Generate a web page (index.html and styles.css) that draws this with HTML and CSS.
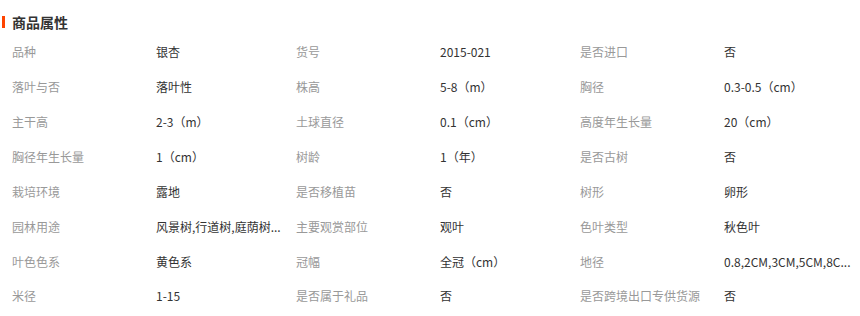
FILE: index.html
```html
<!DOCTYPE html>
<html lang="zh-CN">
<head>
<meta charset="utf-8">
<link rel="stylesheet" href="styles.css">
</head>
<body>
<div class="panel">
  <h2 class="title"><span class="bar"></span>商品属性</h2>
  <div class="attrs">
    <div class="k">品种</div><div class="v">银杏</div>
    <div class="k">货号</div><div class="v">2015-021</div>
    <div class="k">是否进口</div><div class="v">否</div>

    <div class="k">落叶与否</div><div class="v">落叶性</div>
    <div class="k">株高</div><div class="v">5-8（m）</div>
    <div class="k">胸径</div><div class="v">0.3-0.5（cm）</div>

    <div class="k">主干高</div><div class="v">2-3（m）</div>
    <div class="k">土球直径</div><div class="v">0.1（cm）</div>
    <div class="k">高度年生长量</div><div class="v">20（cm）</div>

    <div class="k">胸径年生长量</div><div class="v">1（cm）</div>
    <div class="k">树龄</div><div class="v">1（年）</div>
    <div class="k">是否古树</div><div class="v">否</div>

    <div class="k">栽培环境</div><div class="v">露地</div>
    <div class="k">是否移植苗</div><div class="v">否</div>
    <div class="k">树形</div><div class="v">卵形</div>

    <div class="k">园林用途</div><div class="v">风景树,行道树,庭荫树...</div>
    <div class="k">主要观赏部位</div><div class="v">观叶</div>
    <div class="k">色叶类型</div><div class="v">秋色叶</div>

    <div class="k">叶色色系</div><div class="v">黄色系</div>
    <div class="k">冠幅</div><div class="v">全冠（cm）</div>
    <div class="k">地径</div><div class="v">0.8,2CM,3CM,5CM,8C...</div>

    <div class="k">米径</div><div class="v">1-15</div>
    <div class="k">是否属于礼品</div><div class="v">否</div>
    <div class="k">是否跨境出口专供货源</div><div class="v">否</div>
  </div>
</div>
</body>
</html>
```

FILE: styles.css
```css
html, body {
  margin: 0;
  padding: 0;
  background: #fff;
}
body {
  font-family: "Noto Sans CJK SC", "Noto Sans", sans-serif;
  font-size: 12px;
  color: #333;
}
.panel {
  width: 860px;
  height: 316px;
  overflow: hidden;
}
.title {
  margin: 0;
  padding: 9px 0 0 2px;
  height: 26px;
  display: flex;
  align-items: center;
  font-size: 14px;
  font-weight: bold;
  color: #333;
  line-height: 20px;
}
.bar {
  width: 3px;
  height: 12px;
  background: #ff4400;
  margin-right: 7px;
}
.attrs {
  display: grid;
  grid-template-columns: 144px 140px 144px 140px 144px 136px;
  grid-auto-rows: 34.86px;
  padding-left: 12px;
}
.k, .v {
  display: flex;
  align-items: center;
  white-space: nowrap;
  line-height: 16px;
}
.k {
  color: #999;
}
.v {
  color: #333;
}
```
